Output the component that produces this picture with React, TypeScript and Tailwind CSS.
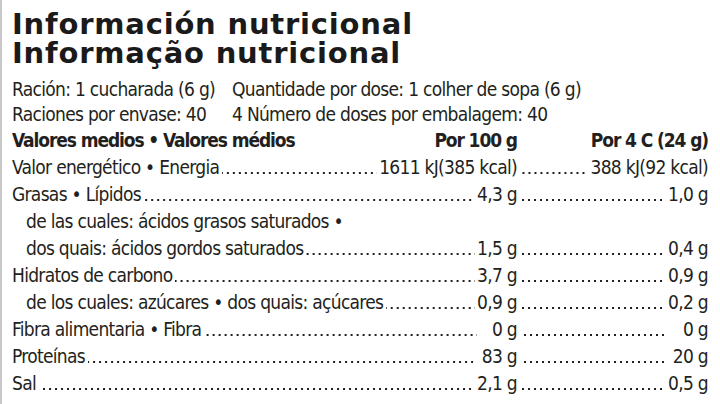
import React from "react";

type Row = {
  label: string;
  per100?: string;
  perServing?: string;
  indent?: boolean;
};

const rows: Row[] = [
  { label: "Valor energético • Energia", per100: "1611 kJ(385 kcal)", perServing: "388 kJ(92 kcal)" },
  { label: "Grasas • Lípidos", per100: "4,3 g", perServing: "1,0 g" },
  { label: "de las cuales: ácidos grasos saturados •", indent: true },
  { label: "dos quais: ácidos gordos saturados", per100: "1,5 g", perServing: "0,4 g", indent: true },
  { label: "Hidratos de carbono", per100: "3,7 g", perServing: "0,9 g" },
  { label: "de los cuales: azúcares • dos quais: açúcares", per100: "0,9 g", perServing: "0,2 g", indent: true },
  { label: "Fibra alimentaria • Fibra", per100: "0 g", perServing: "0 g" },
  { label: "Proteínas", per100: "83 g", perServing: "20 g" },
  { label: "Sal", per100: "2,1 g", perServing: "0,5 g" },
];

// dot leader: 2px squares every 6px, sitting on the baseline
function Dots() {
  return (
    <span className="flex-1 h-[2px] ml-[3px] mr-[2px] [background-image:linear-gradient(to_right,#231f20_2px,transparent_2px)] [background-size:6px_2px] [background-repeat:repeat-x] [background-position:right_bottom]" />
  );
}

function NutrientRow({ row }: { row: Row }) {
  if (!row.per100) {
    return (
      <div className={`h-[27px] whitespace-nowrap ${row.indent ? "pl-[14px]" : ""}`}>{row.label}</div>
    );
  }
  return (
    <div className="grid grid-cols-[1fr_191px] h-[27px]">
      <div className={`flex items-baseline min-w-0 ${row.indent ? "pl-[14px]" : ""}`}>
        <span className="whitespace-nowrap">{row.label}</span>
        <Dots />
        <span className="min-w-[38px] text-right whitespace-nowrap">{row.per100}</span>
      </div>
      <div className="flex items-baseline">
        <Dots />
        <span className="min-w-[38px] text-right whitespace-nowrap">{row.perServing}</span>
      </div>
    </div>
  );
}

export default function App() {
  return (
    <div className="w-[720px] h-[404px] overflow-hidden bg-white border-l-2 border-[#c8c8c8] pl-[10px] pr-[12px] text-[#231f20]">
      <div className="pt-[10px] font-['DejaVu_Sans',sans-serif] font-bold text-[29px] leading-[29px] text-[#1a1a1a] tracking-[0.8px]">
        <div>Información nutricional</div>
        <div>Informação nutricional</div>
      </div>

      <div className="font-['DejaVu_Sans_Condensed','DejaVu_Sans',sans-serif] text-[19px] tracking-[-0.7px] mt-[9px]">
        <div className="grid grid-cols-[220px_1fr] leading-[25px]">
          <div className="whitespace-nowrap">Ración: 1 cucharada (6 g)</div>
          <div className="whitespace-nowrap">Quantidade por dose: 1 colher de sopa (6 g)</div>
          <div className="whitespace-nowrap">Raciones por envase: 40</div>
          <div className="whitespace-nowrap">4 Número de doses por embalagem: 40</div>
        </div>

        <div className="leading-[27px]">
          <div className="grid grid-cols-[1fr_191px] h-[27px] leading-[27px] font-bold tracking-[-1.1px]">
            <div className="flex whitespace-nowrap">
              <span className="flex-1">Valores medios • Valores médios</span>
              <span>Por 100 g</span>
            </div>
            <div className="text-right whitespace-nowrap">Por 4 C (24 g)</div>
          </div>
          {rows.map((r) => (
            <NutrientRow key={r.label} row={r} />
          ))}
        </div>
      </div>
    </div>
  );
}
